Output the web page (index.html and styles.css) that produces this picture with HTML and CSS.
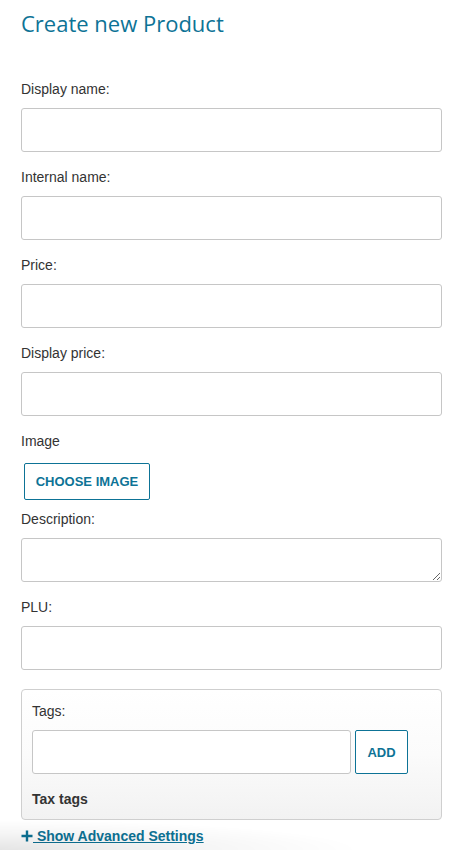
FILE: index.html
```html
<!DOCTYPE html>
<html>
<head>
<meta charset="utf-8">
<link rel="stylesheet" href="styles.css">
</head>
<body>
<div class="page">
  <h1 class="title">Create new Product</h1>
  <form class="form">
    <div class="field">
      <label class="label">Display name:</label>
      <input class="input" type="text">
    </div>
    <div class="field">
      <label class="label">Internal name:</label>
      <input class="input" type="text">
    </div>
    <div class="field">
      <label class="label">Price:</label>
      <input class="input" type="text">
    </div>
    <div class="field">
      <label class="label">Display price:</label>
      <input class="input" type="text">
    </div>
    <div class="field field-image">
      <label class="label">Image</label>
      <button type="button" class="btn btn-choose">CHOOSE IMAGE</button>
    </div>
    <div class="field">
      <label class="label">Description:</label>
      <textarea class="input textarea"></textarea>
    </div>
    <div class="field">
      <label class="label">PLU:</label>
      <input class="input" type="text">
    </div>
    <div class="panel">
      <label class="label">Tags:</label>
      <div class="tag-row">
        <input class="input tag-input" type="text">
        <button type="button" class="btn btn-add">ADD</button>
      </div>
      <div class="tax-tags">Tax tags</div>
    </div>
    <a class="advanced" href="#"><svg class="plus" width="12" height="12" viewBox="0 0 12 12"><path d="M6 0.5V11.5M0.5 6H11.5" stroke="#0d7396" stroke-width="2.4"/></svg><span class="advanced-text"> Show Advanced Settings</span></a>
  </form>
</div>
<div class="bottom-shadow"></div>
</body>
</html>
```
FILE: styles.css
```css
* { box-sizing: border-box; }
html, body { margin: 0; padding: 0; background: #fff; }
body {
  font-family: "Liberation Sans", Arial, sans-serif;
  color: #333;
  overflow: hidden;
}
.page {
  padding: 0 13px 0 21px;
}
.title {
  font-family: "Open Sans", sans-serif;
  font-weight: 400;
  font-size: 22px;
  line-height: 28px;
  color: #0d7396;
  margin: 9px 0 0 0;
}
.form {
  margin-top: 44px;
}
.field {
  margin-bottom: 17px;
}
.label {
  display: block;
  font-size: 14px;
  line-height: 16px;
  color: #333;
  margin-bottom: 11px;
}
.input {
  display: block;
  width: 100%;
  height: 44px;
  border: 1px solid #c6c6c6;
  border-radius: 3px;
  background: #fff;
  font: inherit;
  margin: 0;
  padding: 6px 10px;
}
.textarea {
  resize: vertical;
}
.field-image .label {
  margin-bottom: 14px;
}
.field-image {
  margin-bottom: 11px;
}
.btn {
  font-family: "Liberation Sans", Arial, sans-serif;
  font-weight: 700;
  font-size: 13px;
  color: #0d7396;
  background: #fff;
  border: 1px solid #0d7396;
  border-radius: 2px;
  margin: 0;
  cursor: pointer;
}
.btn-choose {
  display: block;
  margin-left: 3px;
  height: 37px;
  width: 126px;
  padding: 0;
}
.panel {
  margin-top: 19px;
  border: 1px solid #cfcfcf;
  border-radius: 4px;
  background: linear-gradient(to bottom, #ffffff 0%, #fbfbfb 50%, #f2f2f2 100%);
  padding: 13px 10px 11px 10px;
  height: 131px;
}
.panel .label {
  margin-bottom: 11px;
}
.tag-row {
  display: flex;
  gap: 4px;
}
.tag-input {
  width: 319px;
  flex: none;
}
.btn-add {
  width: 53px;
  height: 44px;
  padding: 0;
}
.tax-tags {
  margin-top: 17px;
  font-weight: 700;
  font-size: 14px;
  line-height: 16px;
  color: #333;
}
.advanced {
  display: inline-flex;
  align-items: center;
  margin-top: 8px;
  font-weight: 700;
  font-size: 14px;
  line-height: 16px;
  color: #0d7396;
  text-decoration: none;
}
.plus {
  display: block;
  flex: none;
}
.advanced-text {
  text-decoration: underline;
  white-space: pre;
}
.bottom-shadow {
  position: fixed;
  left: 0;
  bottom: 0;
  width: 360px;
  height: 30px;
  pointer-events: none;
  background: radial-gradient(ellipse 100% 100% at 0% 100%, rgba(0,0,0,0.10) 0%, rgba(0,0,0,0.04) 55%, rgba(0,0,0,0) 100%);
}
```
